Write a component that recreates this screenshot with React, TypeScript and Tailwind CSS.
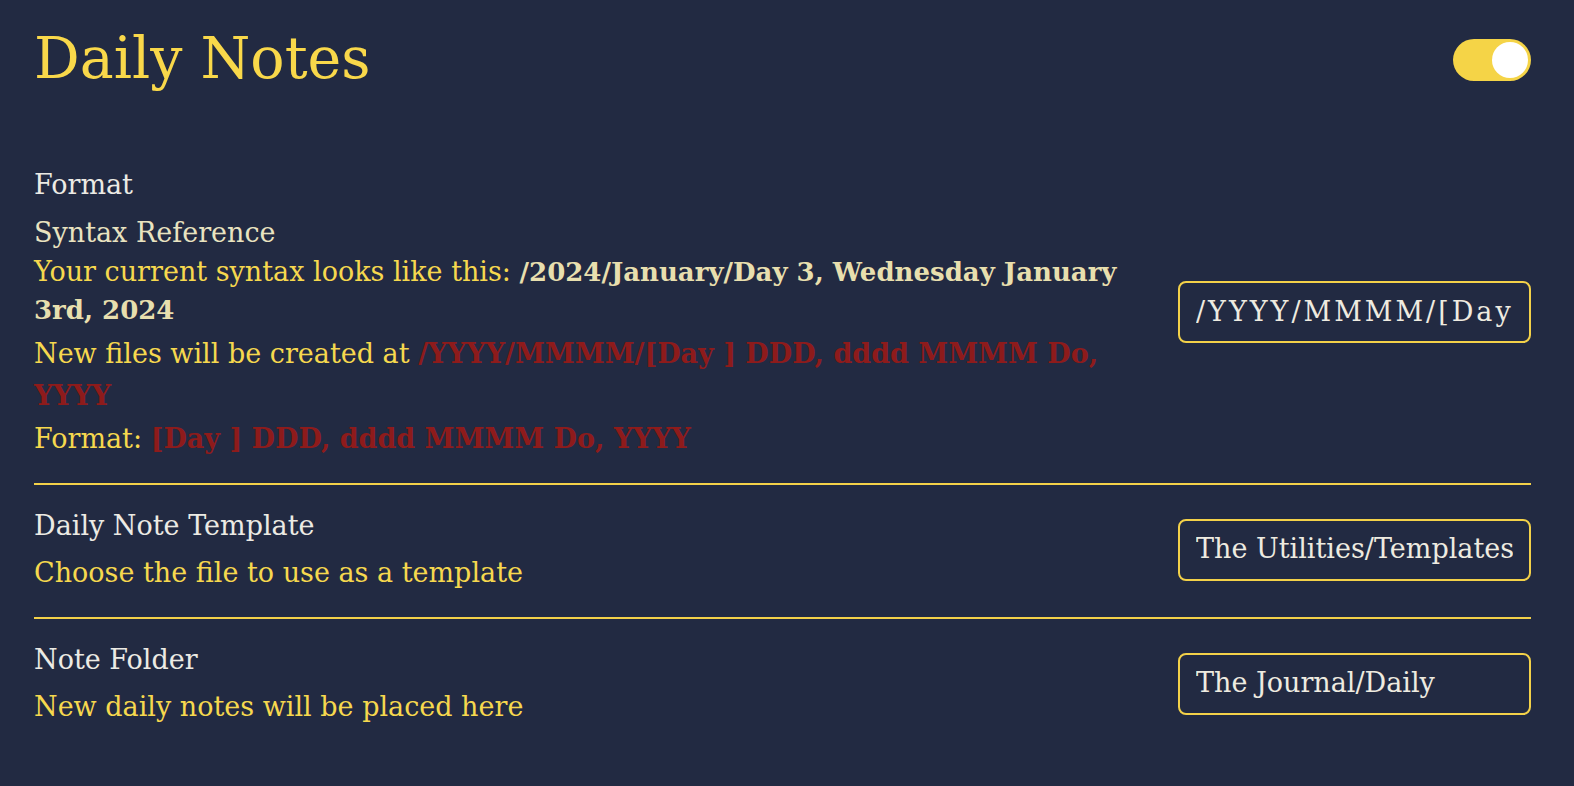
import React, { useState } from 'react';

const font = { fontFamily: '"DejaVu Serif", "Liberation Serif", serif' };

const SettingRow: React.FC<{
  label: string;
  value: string;
  children: React.ReactNode;
  border?: boolean;
  wide?: boolean;
}> = ({ label, value, children, border, wide }) => (
  <div
    className={`flex items-center gap-[34px] pt-[21px] pb-[24px] ${border ? 'border-t-2 border-[#f3d149]' : ''}`}
  >
    <div className="flex-1 min-w-0">
      <div className="text-[#eceae4] text-[27px] leading-[40px]">{label}</div>
      {children}
    </div>
    <div className="w-[353px] h-[62px] shrink-0 rounded-lg border-2 border-[#f3d149] flex items-center">
      <input
        readOnly
        value={value}
        className={`w-full bg-transparent outline-none px-[16px] text-[#eeebe0] text-[27px] ${wide ? 'tracking-[3px]' : ''}`}
        style={font}
      />
    </div>
  </div>
);

export default function App() {
  const [enabled, setEnabled] = useState(true);

  return (
    <div className="min-h-screen w-full bg-[#222a42] pl-[34px] pr-[43px]" style={font}>
      <div className="flex items-center justify-between h-[122px] pb-[2px]">
        <h1 className="text-[#f9d84a] text-[57px] leading-none -mt-[4px]">Daily Notes</h1>
        <button
          onClick={() => setEnabled(!enabled)}
          className={`w-[78px] h-[42px] rounded-full flex items-center px-[3px] ${enabled ? 'bg-[#f5d447] justify-end' : 'bg-[#4b5563] justify-start'}`}
        >
          <span className="w-[36px] h-[36px] rounded-full bg-white block" />
        </button>
      </div>

      <div className="pt-[22px]">
        <SettingRow label="Format" value="/YYYY/MMMM/[Day ] DDD, dddd MMMM Do, YYYY" wide>
          <div className="text-[#e9e3c0] text-[27px] leading-[40px] mt-[8px]">Syntax Reference</div>
          <div className="text-[#f6d84e] text-[27px] leading-[38px]">
            Your current syntax looks like this:{' '}
            <span className="font-bold text-[#e8dfae] text-[26px]">/2024/January/Day 3, Wednesday January 3rd, 2024</span>
          </div>
          <div className="text-[#f6d84e] text-[27px] leading-[42px] mt-[4px]">
            New files will be created at{' '}
            <span className="font-bold text-[#8e1b1b]">/YYYY/MMMM/[Day ] DDD, dddd MMMM Do, YYYY</span>
          </div>
          <div className="text-[#f6d84e] text-[27px] leading-[40px] mt-[2px]">
            Format: <span className="font-bold text-[#8e1b1b]">[Day ] DDD, dddd MMMM Do, YYYY</span>
          </div>
        </SettingRow>

        <SettingRow label="Daily Note Template" value="The Utilities/Templates" border>
          <div className="text-[#f6d84e] text-[27px] leading-[40px] mt-[7px]">Choose the file to use as a template</div>
        </SettingRow>

        <SettingRow label="Note Folder" value="The Journal/Daily" border>
          <div className="text-[#f6d84e] text-[27px] leading-[40px] mt-[7px]">New daily notes will be placed here</div>
        </SettingRow>
      </div>
    </div>
  );
}
